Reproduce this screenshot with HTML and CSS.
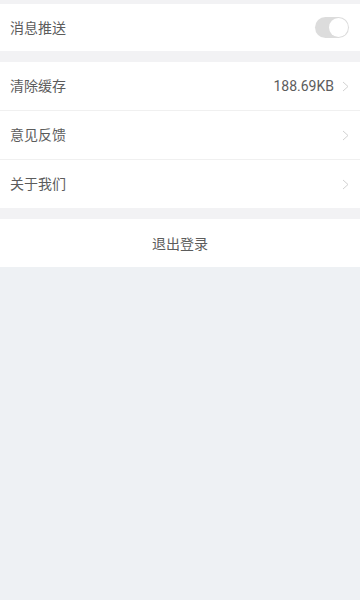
FILE: index.html
```html
<!DOCTYPE html>
<html lang="zh">
<head>
<meta charset="utf-8">
<link rel="stylesheet" href="styles.css">
</head>
<body>
<div class="page">
  <div class="group first">
    <div class="row">
      <span class="label">消息推送</span>
      <span class="toggle"><span class="knob"></span></span>
    </div>
  </div>
  <div class="group">
    <div class="row">
      <span class="label">清除缓存</span>
      <span class="right"><span class="value">188.69KB</span><svg class="chev" width="7" height="11" viewBox="0 0 7 11"><path d="M1 1 L6 5.5 L1 10" fill="none" stroke="#d2d2d2" stroke-width="1"/></svg></span>
    </div>
    <div class="row">
      <span class="label">意见反馈</span>
      <span class="right"><svg class="chev" width="7" height="11" viewBox="0 0 7 11"><path d="M1 1 L6 5.5 L1 10" fill="none" stroke="#d2d2d2" stroke-width="1"/></svg></span>
    </div>
    <div class="row">
      <span class="label">关于我们</span>
      <span class="right"><svg class="chev" width="7" height="11" viewBox="0 0 7 11"><path d="M1 1 L6 5.5 L1 10" fill="none" stroke="#d2d2d2" stroke-width="1"/></svg></span>
    </div>
  </div>
  <div class="group">
    <div class="logout">退出登录</div>
  </div>
</div>
</body>
</html>
```
FILE: styles.css
```css
html, body {
  margin: 0;
  padding: 0;
  background: #eef1f4;
}
body {
  font-family: Roboto, "Noto Sans CJK SC", sans-serif;
  color: #5c5c5c;
  font-size: 14px;
}
.page {
  width: 360px;
  min-height: 600px;
  background: #eef1f4;
}
.group {
  background: #fff;
  border-top: 11px solid #f2f2f4;
}
.group.first {
  border-top-width: 4px;
}
.row {
  height: 48px;
  display: flex;
  align-items: center;
  justify-content: space-between;
  padding: 0 10px;
  border-top: 1px solid #f0f0f0;
}
.group.first .row {
  height: 47px;
}
.row:first-child {
  border-top: none;
}
.label {
  line-height: 20px;
}
.right {
  display: flex;
  align-items: center;
  gap: 8px;
}
.chev {
  display: block;
  margin-right: 1px;
}
.toggle {
  width: 34px;
  height: 21px;
  border-radius: 11px;
  background: #dcdcdc;
  position: relative;
  margin-right: 1px;
}
.knob {
  position: absolute;
  right: 1px;
  top: 1px;
  width: 19px;
  height: 19px;
  border-radius: 50%;
  background: #fff;
}
.logout {
  height: 48px;
  display: flex;
  align-items: center;
  justify-content: center;
}
```
